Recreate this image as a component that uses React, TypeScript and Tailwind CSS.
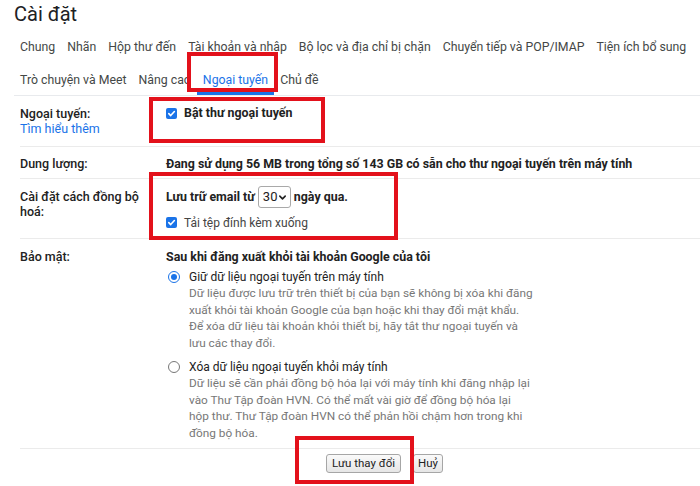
import React from 'react';

const tabsRow1 = ['Chung', 'Nhãn', 'Hộp thư đến', 'Tài khoản và nhập', 'Bộ lọc và địa chỉ bị chặn', 'Chuyển tiếp và POP/IMAP', 'Tiện ích bổ sung'];
const tabsRow2 = ['Trò chuyện và Meet', 'Nâng cao', 'Ngoại tuyến', 'Chủ đề'];

function Tab({ label, active }: { label: string; active?: boolean }) {
  return (
    <div
      className={`px-[6px] pb-[4px] border-b-[3px] text-[12.3px] leading-[16px] whitespace-nowrap ${
        active ? 'border-[#1a73e8] text-[#1a73e8]' : 'border-transparent text-[#444746]'
      }`}
    >
      {label}
    </div>
  );
}

function Checkbox() {
  return (
    <span className="inline-flex w-[11px] h-[11px] rounded-[2px] bg-[#1a73e8] items-center justify-center shrink-0">
      <svg width="9" height="9" viewBox="0 0 10 10">
        <path d="M2 5.2 L4.1 7.3 L8.2 2.8" stroke="white" strokeWidth="1.8" fill="none" strokeLinecap="round" strokeLinejoin="round" />
      </svg>
    </span>
  );
}

function Radio({ checked }: { checked?: boolean }) {
  return checked ? (
    <span className="inline-flex w-[12px] h-[12px] rounded-full border-[1.5px] border-[#1a73e8] items-center justify-center shrink-0 bg-white">
      <span className="w-[6px] h-[6px] rounded-full bg-[#1a73e8]" />
    </span>
  ) : (
    <span className="inline-block w-[12px] h-[12px] rounded-full border border-[#777] shrink-0 bg-white" />
  );
}

function RadioOption({ checked, title, lines }: { checked?: boolean; title: string; lines: string[] }) {
  return (
    <div className="flex gap-[9px] pl-[2px]">
      <div className="h-[16px] flex items-center">
        <Radio checked={checked} />
      </div>
      <div>
        <div className="text-[12px] leading-[16px] text-[#222]">{title}</div>
        <div className="text-[11.8px] leading-[16.5px] text-[#777]">
          {lines.map((l) => (
            <div key={l}>{l}</div>
          ))}
        </div>
      </div>
    </div>
  );
}

function RedBox({ className }: { className: string }) {
  return <div className={`absolute border-4 border-[#e3111b] pointer-events-none ${className}`} />;
}

export default function App() {
  return (
    <div className="relative w-[700px] h-[486px] overflow-hidden bg-white font-['Roboto','Liberation_Sans',sans-serif] text-[#202124]">
      <h1 className="pl-[14px] pt-[3px] text-[20px] leading-[22px] text-[#202124]">Cài đặt</h1>

      {/* Tabs */}
      <div className="mt-[14px] ml-[14px] border-b border-[#e8eaed]">
        <div className="flex">
          {tabsRow1.map((t) => (
            <Tab key={t} label={t} />
          ))}
        </div>
        <div className="flex mt-[10px]">
          {tabsRow2.map((t) => (
            <Tab key={t} label={t} active={t === 'Ngoại tuyến'} />
          ))}
        </div>
      </div>

      <div className="ml-[20px]">
        {/* Offline */}
        <div className="flex pt-[10px] pb-[10px] border-b border-[#ebebeb]">
          <div className="w-[146px] text-[12.5px] leading-[15px] font-medium text-[#222]">
            <div>Ngoại tuyến:</div>
            <div className="text-[#1a73e8] font-normal">Tìm hiểu thêm</div>
          </div>
          <div className="flex items-center gap-[7px] h-[15px]">
            <Checkbox />
            <span className="text-[12.4px] font-bold text-[#222]">Bật thư ngoại tuyến</span>
          </div>
        </div>

        {/* Storage */}
        <div className="flex pt-[9px] pb-[7px] border-b border-[#ebebeb] leading-[15px]">
          <div className="w-[146px] text-[12.5px] font-medium text-[#222]">Dung lượng:</div>
          <div className="text-[12.4px] font-bold text-[#222]">
            Đang sử dụng 56 MB trong tổng số 143 GB có sẵn cho thư ngoại tuyến trên máy tính
          </div>
        </div>

        {/* Sync */}
        <div className="flex pb-[8px] border-b border-[#ebebeb]">
          <div className="w-[146px] pt-[10px] text-[12.5px] leading-[15px] font-medium text-[#222]">
            Cài đặt cách đồng bộ
            <br />
            hoá:
          </div>
          <div className="pt-[7px]">
            <div className="flex items-center h-[22px] text-[12.4px] font-bold text-[#222]">
              <span>Lưu trữ email từ</span>
              <span className="ml-[3px] mr-[3px] h-[22px] w-[33px] border border-[#a9a9a9] rounded-[3px] flex items-center justify-between pl-[4px] pr-[3px] font-normal text-[13px]">
                30
                <svg width="9" height="9" viewBox="0 0 10 10">
                  <path d="M2 3.5 L5 6.5 L8 3.5" stroke="#222" strokeWidth="1.8" fill="none" strokeLinecap="round" strokeLinejoin="round" />
                </svg>
              </span>
              <span>ngày qua.</span>
            </div>
            <div className="flex items-center gap-[7px] mt-[7px] h-[15px]">
              <Checkbox />
              <span className="text-[12px] text-[#444]">Tải tệp đính kèm xuống</span>
            </div>
          </div>
        </div>

        {/* Security */}
        <div className="flex pt-[10px] pb-[7px] border-b border-[#ebebeb]">
          <div className="w-[146px] text-[12.5px] leading-[15px] font-medium text-[#222]">Bảo mật:</div>
          <div>
            <div className="text-[12.4px] leading-[15px] font-bold text-[#222]">Sau khi đăng xuất khỏi tài khoản Google của tôi</div>
            <div className="mt-[5px]">
              <RadioOption
                checked
                title="Giữ dữ liệu ngoại tuyến trên máy tính"
                lines={[
                  'Dữ liệu được lưu trữ trên thiết bị của bạn sẽ không bị xóa khi đăng',
                  'xuất khỏi tài khoản Google của bạn hoặc khi thay đổi mật khẩu.',
                  'Để xóa dữ liệu tài khoản khỏi thiết bị, hãy tắt thư ngoại tuyến và',
                  'lưu các thay đổi.',
                ]}
              />
            </div>
            <div className="mt-[8px]">
              <RadioOption
                title="Xóa dữ liệu ngoại tuyến khỏi máy tính"
                lines={[
                  'Dữ liệu sẽ cần phải đồng bộ hóa lại với máy tính khi đăng nhập lại',
                  'vào Thư Tập đoàn HVN. Có thể mất vài giờ để đồng bộ hóa lại',
                  'hộp thư. Thư Tập đoàn HVN có thể phản hồi chậm hơn trong khi',
                  'đồng bộ hóa.',
                ]}
              />
            </div>
          </div>
        </div>

        {/* Buttons */}
        <div className="flex gap-[12px] pl-[306px] pt-[5px]">
          <button className="h-[19px] px-[5px] text-[11.5px] leading-[17px] text-[#222] border border-[#a6a6a6] rounded-[3px] bg-gradient-to-b from-[#fafafa] to-[#e6e6e6]">
            Lưu thay đổi
          </button>
          <button className="h-[19px] px-[4px] text-[11.5px] leading-[17px] text-[#222] border border-[#a6a6a6] rounded-[3px] bg-gradient-to-b from-[#fafafa] to-[#e6e6e6]">
            Huỷ
          </button>
        </div>
      </div>

      {/* Annotation boxes */}
      <RedBox className="left-[187px] top-[52px] w-[91px] h-[40px]" />
      <RedBox className="left-[149px] top-[97px] w-[176px] h-[46px]" />
      <RedBox className="left-[149px] top-[172px] w-[249px] h-[68px]" />
      <RedBox className="left-[295px] top-[436px] w-[119px] h-[48px]" />
    </div>
  );
}
